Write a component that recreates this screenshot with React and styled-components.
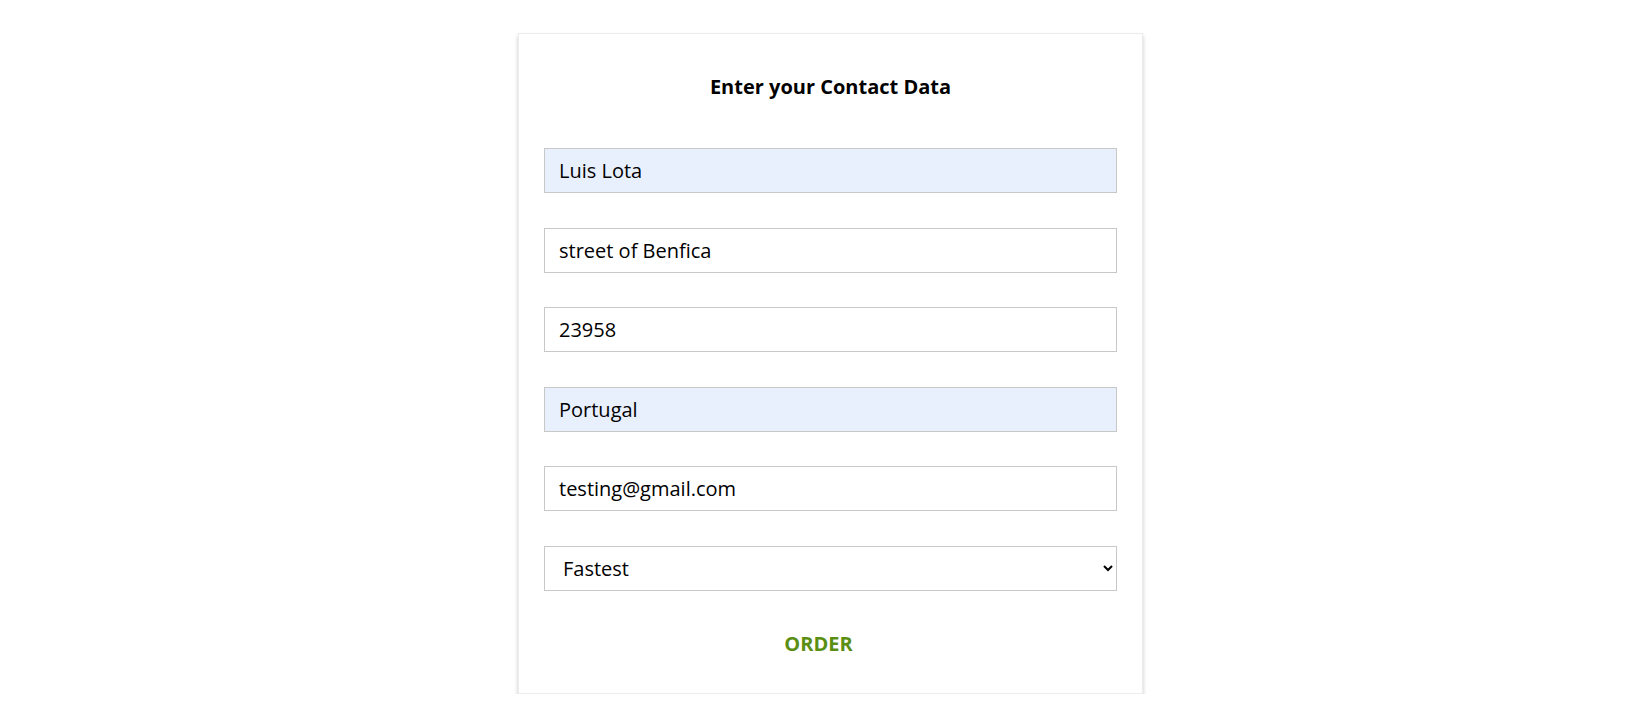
import React from "react";
import styled, { createGlobalStyle } from "styled-components";

const GlobalStyle = createGlobalStyle`
  body {
    margin: 0;
    background: #fff;
    font-family: "Open Sans", "Noto Sans", sans-serif;
  }
`;

function App() {
  return (
    <>
      <GlobalStyle />
      <PageStyled>
        <CardStyled>
          <TitleStyled>Enter your Contact Data</TitleStyled>
          <FormStyled onSubmit={(e) => e.preventDefault()}>
            <InputStyled defaultValue="Luis Lota" $filled />
            <InputStyled defaultValue="street of Benfica" />
            <InputStyled defaultValue="23958" />
            <InputStyled defaultValue="Portugal" $filled />
            <InputStyled defaultValue="testing@gmail.com" />
            <SelectStyled defaultValue="fastest">
              <option value="fastest">Fastest</option>
              <option value="cheapest">Cheapest</option>
            </SelectStyled>
            <ButtonStyled type="submit">Order</ButtonStyled>
          </FormStyled>
        </CardStyled>
      </PageStyled>
    </>
  );
}

export const PageStyled = styled.div`
  display: flex;
  justify-content: center;
  padding: 33px 0 0 29px;
`;

export const CardStyled = styled.div`
  width: 625px;
  box-sizing: border-box;
  padding: 39px 25px 35px;
  background: #fff;
  border: 1px solid #ececec;
  box-shadow: 0 3px 4px rgba(0, 0, 0, 0.22);
`;

export const TitleStyled = styled.h3`
  margin: 0 0 47px;
  text-align: center;
  font-size: 20px;
  line-height: 28px;
  font-weight: 700;
  color: #000;
`;

export const FormStyled = styled.form`
  display: flex;
  flex-direction: column;
  gap: 34.5px;
`;

export const InputStyled = styled.input`
  height: 45px;
  box-sizing: border-box;
  padding: 0 14px;
  border: 1px solid #c8c8c8;
  background: ${(p) => (p.$filled ? "#e8f0fe" : "#fff")};
  font-family: inherit;
  font-size: 20px;
  color: #000;
  outline: none;
`;

export const SelectStyled = styled.select`
  height: 45px;
  box-sizing: border-box;
  padding: 0 12px 0 14px;
  border: 1px solid #c8c8c8;
  border-radius: 0;
  background: #fff;
  font-family: inherit;
  font-size: 20px;
  color: #000;
`;

export const ButtonStyled = styled.button`
  align-self: center;
  margin: 5px 24px 0 0;
  padding: 0;
  border: none;
  background: none;
  font-family: inherit;
  font-size: 20px;
  line-height: 28px;
  font-weight: 700;
  text-transform: uppercase;
  color: #5b8f14;
  cursor: pointer;
`;

export default App;
